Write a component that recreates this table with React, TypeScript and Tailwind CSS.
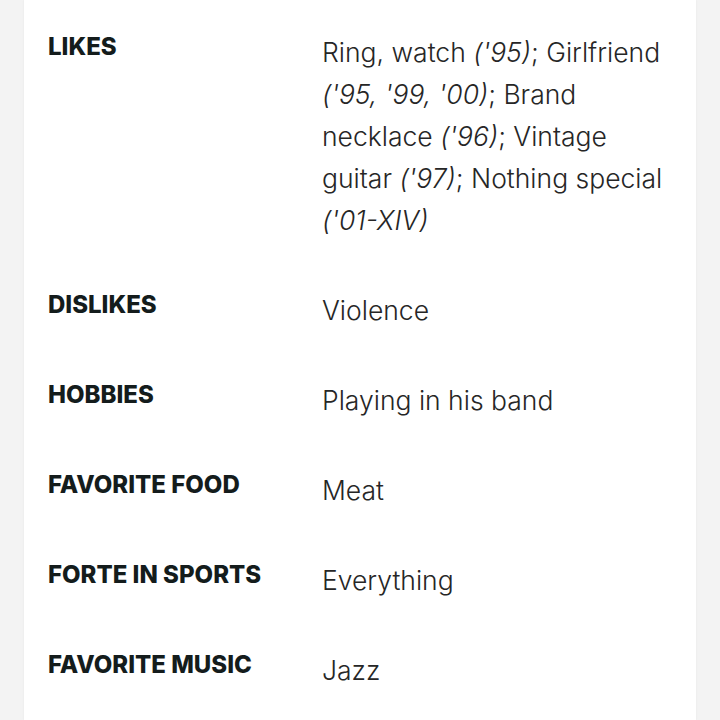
const rows: { label: string; value: React.ReactNode }[] = [
  {
    label: "LIKES",
    value: (
      <>
        Ring, watch <i>('95)</i>; Girlfriend <i>('95, '99, '00)</i>; Brand
        necklace <i>('96)</i>; Vintage guitar <i>('97)</i>; Nothing special{" "}
        <i>('01-XIV)</i>
      </>
    ),
  },
  { label: "DISLIKES", value: "Violence" },
  { label: "HOBBIES", value: "Playing in his band" },
  { label: "FAVORITE FOOD", value: "Meat" },
  { label: "FORTE IN SPORTS", value: "Everything" },
  { label: "FAVORITE MUSIC", value: "Jazz" },
];

export default function App() {
  return (
    <div className="h-[720px] overflow-hidden bg-[#f3f3f3] px-6">
      <div className="h-full bg-white shadow-[0_0_2px_rgba(0,0,0,0.06)] px-6 pt-[31px] flex flex-col gap-12">
        {rows.map((r) => (
          <div key={r.label} className="flex">
            <div
              className="w-[274px] shrink-0 text-[24px] leading-[32px] font-extrabold text-[#141c1c]"
              style={{ fontFamily: "Inter, sans-serif" }}
            >
              {r.label}
            </div>
            <div
              className="flex-1 text-[26.5px] leading-[42px] font-light text-[#262626]"
              style={{ fontFamily: "Inter, sans-serif" }}
            >
              {r.value}
            </div>
          </div>
        ))}
      </div>
    </div>
  );
}
